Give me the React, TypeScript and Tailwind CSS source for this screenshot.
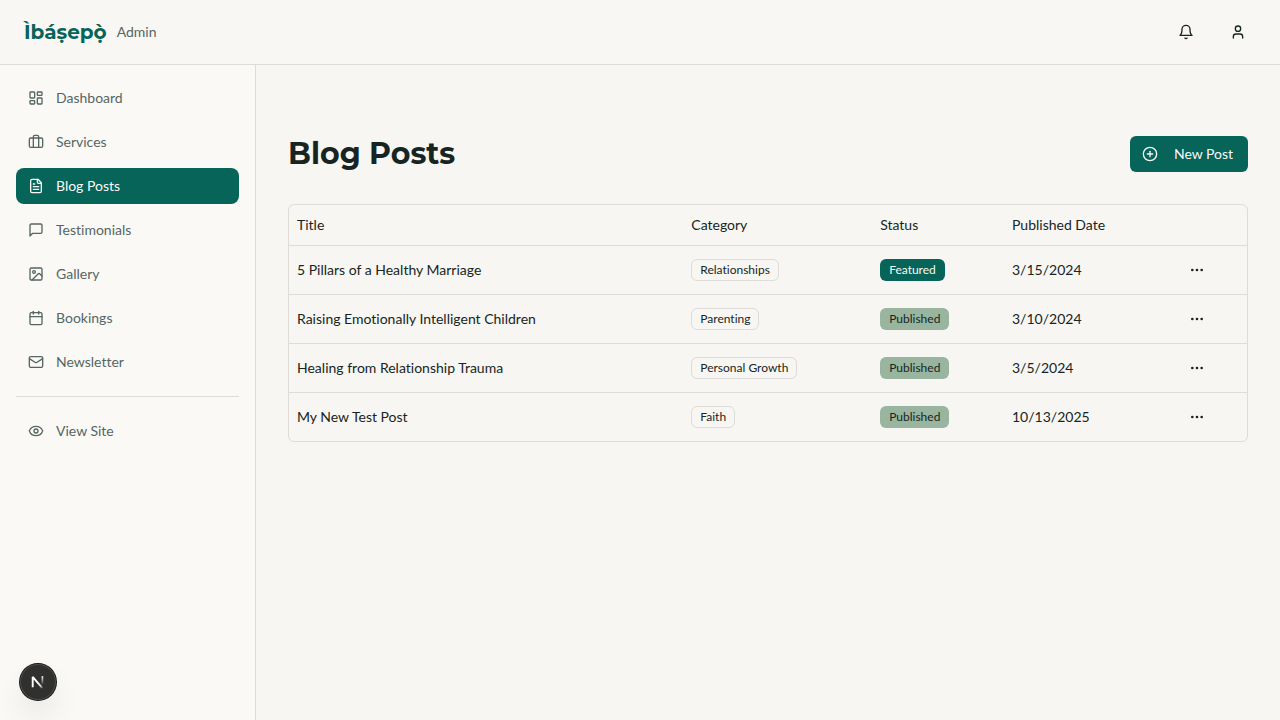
import type { ComponentType, ReactNode, SVGProps } from "react";
import { Briefcase, Calendar, CirclePlus, Ellipsis, Eye, Image, LayoutDashboard, User } from "lucide-react";

type IconType = ComponentType<{ className?: string }>;
type NavItem = { label: string; icon: IconType; active?: boolean };

function Outline({ children, ...props }: SVGProps<SVGSVGElement> & { children: ReactNode }) {
  return (
    <svg
      viewBox="0 0 24 24"
      fill="none"
      stroke="currentColor"
      strokeWidth="2"
      strokeLinecap="round"
      strokeLinejoin="round"
      aria-hidden="true"
      {...props}
    >
      {children}
    </svg>
  );
}

function BellIcon({ className }: { className?: string }) {
  return (
    <Outline className={className}>
      <path d="M6 8a6 6 0 0 1 12 0c0 7 3 9 3 9H3s3-2 3-9" />
      <path d="M10.3 21a1.94 1.94 0 0 0 3.4 0" />
    </Outline>
  );
}

function MessageIcon({ className }: { className?: string }) {
  return (
    <Outline className={className}>
      <path d="M21 15a2 2 0 0 1-2 2H7l-4 4V5a2 2 0 0 1 2-2h14a2 2 0 0 1 2 2z" />
    </Outline>
  );
}

function FileIcon({ className }: { className?: string }) {
  return (
    <Outline className={className}>
      <path d="M15 2H6a2 2 0 0 0-2 2v16a2 2 0 0 0 2 2h12a2 2 0 0 0 2-2V7Z" />
      <path d="M14 2v4a2 2 0 0 0 2 2h4" />
      <path d="M10 9H8" />
      <path d="M16 13H8" />
      <path d="M16 17H8" />
    </Outline>
  );
}

function MailIcon({ className }: { className?: string }) {
  return (
    <Outline className={className}>
      <rect width="20" height="16" x="2" y="4" rx="2" />
      <path d="m22 7-8.97 5.7a1.94 1.94 0 0 1-2.06 0L2 7" />
    </Outline>
  );
}

const navItems: NavItem[] = [
  { label: "Dashboard", icon: LayoutDashboard },
  { label: "Services", icon: Briefcase },
  { label: "Blog Posts", icon: FileIcon, active: true },
  { label: "Testimonials", icon: MessageIcon },
  { label: "Gallery", icon: Image },
  { label: "Bookings", icon: Calendar },
  { label: "Newsletter", icon: MailIcon },
];

const posts = [
  { title: "5 Pillars of a Healthy Marriage", category: "Relationships", featured: true, date: "3/15/2024" },
  { title: "Raising Emotionally Intelligent Children", category: "Parenting", featured: false, date: "3/10/2024" },
  { title: "Healing from Relationship Trauma", category: "Personal Growth", featured: false, date: "3/5/2024" },
  { title: "My New Test Post", category: "Faith", featured: false, date: "10/13/2025" },
];

function NavLink({ label, icon: Icon, active }: NavItem) {
  return (
    <a
      href="#"
      aria-current={active ? "page" : undefined}
      className={
        active
          ? "flex items-center gap-3 rounded-lg bg-[#066459] px-3 py-2 text-sm text-[#faf9f6]"
          : "flex items-center gap-3 rounded-lg px-3 py-2 text-sm text-[#556663]"
      }
    >
      <Icon className="size-4" />
      {label}
    </a>
  );
}

function Header() {
  return (
    <header className="flex h-[65px] items-center justify-between border-b border-[#dddcd8] bg-[#f8f7f4] px-6">
      <a href="#" className="flex items-center gap-2.5">
        <span className="font-[Montserrat,Inter,sans-serif] text-xl font-bold text-[#066459]">Ìbáṣepọ̀</span>
        <span className="text-sm text-[#556663]">Admin</span>
      </a>
      <div className="flex items-center gap-4">
        <button type="button" aria-label="Notifications" className="flex size-9 items-center justify-center rounded-md">
          <BellIcon className="size-4" />
        </button>
        <button type="button" aria-label="Account" className="flex size-9 items-center justify-center rounded-md">
          <User className="size-4" />
        </button>
      </div>
    </header>
  );
}

function Sidebar() {
  return (
    <aside className="w-64 shrink-0 border-r border-[#dddcd8] bg-[#faf9f6] px-4 pt-[15px] pb-4">
      <nav className="flex flex-col gap-2">
        {navItems.map((item) => (
          <NavLink key={item.label} {...item} />
        ))}
      </nav>
      <div className="mt-4 border-t border-[#dddcd8] pt-4">
        <NavLink label="View Site" icon={Eye} />
      </div>
    </aside>
  );
}

function PostsTable() {
  return (
    <div className="overflow-hidden rounded-md border border-[#dddcd8]">
      <table className="w-full text-left text-sm">
        <thead>
          <tr className="border-b border-[#dddcd8]">
            <th className="h-10 px-2 font-normal">Title</th>
            <th className="h-10 px-2 font-normal">Category</th>
            <th className="h-10 px-2 font-normal">Status</th>
            <th className="h-10 px-2 font-normal">Published Date</th>
            <th className="h-10 px-2" aria-label="Actions" />
          </tr>
        </thead>
        <tbody>
          {posts.map((post) => (
            <tr key={post.title} className="border-b border-[#dddcd8] last:border-b-0">
              <td className="p-2">{post.title}</td>
              <td className="p-2">
                <span className="inline-flex rounded-md border border-[#dddcd8] px-2 py-0.5 text-xs">
                  {post.category}
                </span>
              </td>
              <td className="p-2">
                <span
                  className={
                    post.featured
                      ? "inline-flex rounded-md border border-transparent bg-[#066459] px-2 py-0.5 text-xs text-[#faf9f6]"
                      : "inline-flex rounded-md border border-transparent bg-[#99b59f] px-2 py-0.5 text-xs"
                  }
                >
                  {post.featured ? "Featured" : "Published"}
                </span>
              </td>
              <td className="p-2">{post.date}</td>
              <td className="p-2">
                <button
                  type="button"
                  aria-label={`Actions for ${post.title}`}
                  className="flex size-8 items-center justify-center rounded-md"
                >
                  <Ellipsis className="size-4" />
                </button>
              </td>
            </tr>
          ))}
        </tbody>
      </table>
    </div>
  );
}

function DevToolsButton() {
  return (
    <button
      type="button"
      aria-label="Open developer tools"
      className="fixed bottom-5 left-5 flex size-9 items-center justify-center rounded-full bg-[#30302e] shadow-[0_0_0_1px_#171717,inset_0_0_0_1px_#4b4b49,0_16px_32px_-8px_rgba(0,0,0,0.24)]"
    >
      <svg viewBox="0 0 14 14" fill="none" className="size-3.5" aria-hidden="true">
        <defs>
          <linearGradient id="diagonal" x1="7" y1="7" x2="12" y2="13" gradientUnits="userSpaceOnUse">
            <stop stopColor="white" />
            <stop offset="0.6" stopColor="white" stopOpacity="0.8" />
            <stop offset="1" stopColor="white" stopOpacity="0.1" />
          </linearGradient>
          <linearGradient id="stem" x1="11" y1="1" x2="11" y2="10" gradientUnits="userSpaceOnUse">
            <stop stopColor="white" />
            <stop offset="1" stopColor="white" stopOpacity="0" />
          </linearGradient>
        </defs>
        <path d="M1.7 12.3V1.9L11.4 13.2" stroke="url(#diagonal)" strokeWidth="1.9" strokeLinejoin="bevel" />
        <path d="M11.4 1.2V9.8" stroke="url(#stem)" strokeWidth="1.7" />
      </svg>
    </button>
  );
}

export default function App() {
  return (
    <div className="flex min-h-screen flex-col bg-[#f7f6f3] font-[Lato,sans-serif] text-[#172522] [font-variant-ligatures:none]">
      <Header />
      <div className="flex grow">
        <Sidebar />
        <main className="min-w-0 grow px-8 pt-16">
          <div className="mb-8 flex items-center justify-between pt-[7px]">
            <h1 className="font-[Montserrat,Inter,sans-serif] text-3xl font-bold">Blog Posts</h1>
            <button
              type="button"
              className="flex h-9 min-w-[118px] items-center gap-4 rounded-md bg-[#066459] px-3 text-sm text-[#faf9f6]"
            >
              <CirclePlus className="size-4" />
              New Post
            </button>
          </div>
          <PostsTable />
        </main>
      </div>
      <DevToolsButton />
    </div>
  );
}
